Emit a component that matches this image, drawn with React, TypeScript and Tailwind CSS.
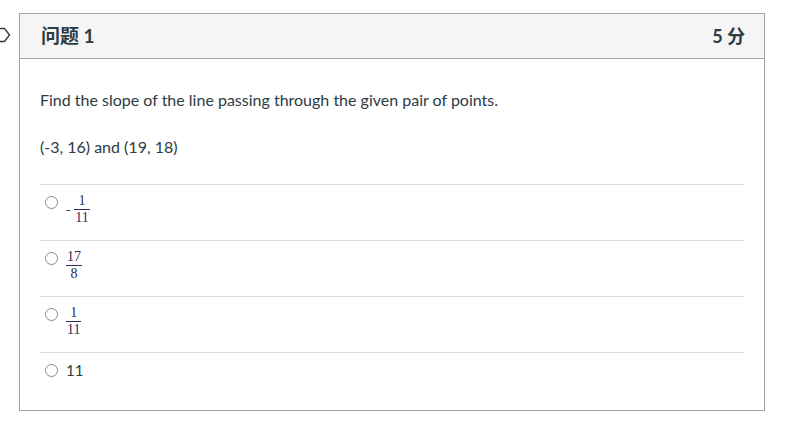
import React from "react";

const serif = { fontFamily: '"Liberation Serif", "DejaVu Serif", serif' };

const Frac = ({ n, d }: { n: string; d: string }) => (
  <span className="inline-flex flex-col items-center text-[#2d2b5a] text-[14px] leading-[14px]" style={serif}>
    <span className="px-[1px] pb-[1px]">{n}</span>
    <span className="h-px w-full bg-[#2d2b5a]" />
    <span className="px-[1px] pt-[1px]">{d}</span>
  </span>
);

const Radio = ({ className = "" }: { className?: string }) => (
  <span className={`inline-block w-[13px] h-[13px] rounded-full border border-[#8a8a8a] bg-white shrink-0 ${className}`} />
);

export default function App() {
  const fracs: React.ReactNode[] = [
    <span className="flex items-center gap-[4px]">
      <span className="text-[#2d3b45] text-[13px]" style={serif}>-</span>
      <Frac n="1" d="11" />
    </span>,
    <Frac n="17" d="8" />,
    <Frac n="1" d="11" />,
  ];
  return (
    <div className="relative w-[795px] h-[425px] bg-white pl-[19px] pt-[13px]" style={{ fontFamily: 'Lato, "Noto Sans CJK SC", sans-serif' }}>
      <svg className="absolute left-0 top-[27px]" width="11" height="16" viewBox="0 0 11 16">
        <path d="M-2 1.5 H4.5 L9.5 8 L4.5 14.5 H-2" fill="none" stroke="#2d3b45" strokeWidth="1.3" strokeLinejoin="round" />
      </svg>
      <div className="w-[746px] h-[398px] border border-[#a5a5a5] flex flex-col overflow-hidden">
        <div className="h-[45px] shrink-0 bg-[#f5f5f5] border-b border-[#a5a5a5] flex items-center justify-between pl-[21px] pr-[19px] font-bold text-[#2d3b45]">
          <span className="text-[19px]">问题 1</span>
          <span className="text-[18px]">5 分</span>
        </div>
        <div className="px-[20px] pt-[29px] text-[#2d3b45] text-[16px]">
          <p className="leading-[24px]">Find the slope of the line passing through the given pair of points.</p>
          <p className="leading-[24px] mt-[23px]">(-3, 16) and (19, 18)</p>
          <div className="mt-[25px]">
            {fracs.map((f, i) => (
              <div key={i} className="h-[56px] border-t border-[#dcdcdc] flex items-start gap-[8px] pt-[9px] pl-[5px]">
                <Radio className="mt-[2px]" />
                {f}
              </div>
            ))}
            <div className="h-[56px] border-t border-[#dcdcdc] flex items-start pt-[8px] pl-[5px]">
              <div className="flex items-center gap-[8px] h-[18px]">
                <Radio />
                <span className="text-[15px] text-[#2d3b45]">11</span>
              </div>
            </div>
          </div>
        </div>
      </div>
    </div>
  );
}
